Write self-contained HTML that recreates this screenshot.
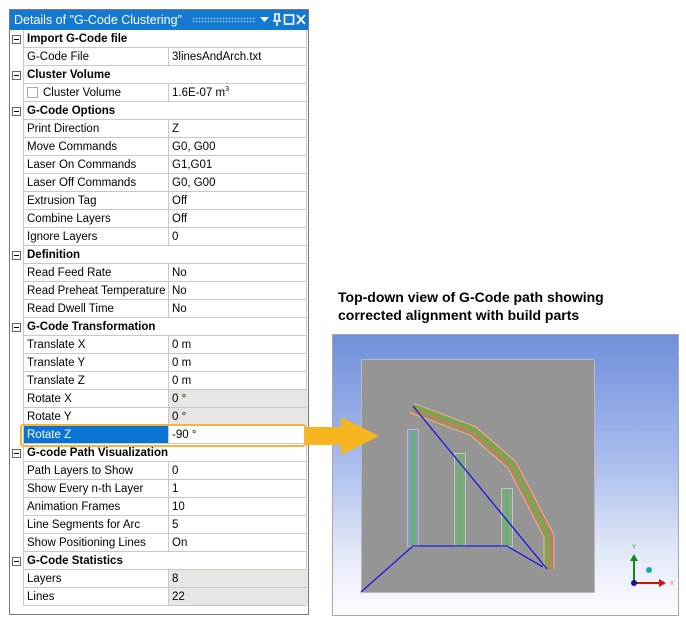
<!DOCTYPE html>
<html><head><meta charset="utf-8"><style>
*{margin:0;padding:0;box-sizing:border-box}
body{width:686px;height:624px;background:#fff;position:relative;overflow:hidden;font-family:"Liberation Sans",Arial,sans-serif;font-size:11.5px;color:#000}
.panel{position:absolute;left:9px;top:9px;width:300px;height:606px;border:1px solid #7a7a7a;background:#fff}
.title{position:absolute;left:10px;top:10px;width:298px;height:20px;background:#1479d0;color:#fff;font-size:12.5px;line-height:20px;padding-left:4px;white-space:nowrap}
.row{position:absolute;left:23px;width:284px;height:18px;border-bottom:1px solid #c8c8c8;border-left:1px solid #c8c8c8;border-right:1px solid #c8c8c8;line-height:19px;white-space:nowrap}
.row .n{position:absolute;left:3px;top:0}
.row .v{position:absolute;left:144px;top:0;width:140px;height:17px;border-left:1px solid #c8c8c8;padding-left:3px}
.row .v.g{background:#e8e6e2}
.hdr{font-weight:bold}
.mb{position:absolute;left:12px;width:9px;height:9px;border:1px solid #666;background:#fff}
.mb:after{content:"";position:absolute;left:1px;top:3px;width:5px;height:1px;background:#000}
.cap{position:absolute;left:338px;top:288px;font-family:"Liberation Sans",Arial,sans-serif;font-weight:bold;font-size:14px;line-height:18px;color:#000}
sup{font-size:7px;line-height:0;vertical-align:5px}
</style></head><body>
<div class="panel"></div>
<div class="title">Details of "G-Code Clustering"
<span style="position:absolute;left:182px;top:7px;width:64px;height:6px;background-image:radial-gradient(#7fb3e6 40%,transparent 45%);background-size:3px 3px"></span>
<svg style="position:absolute;left:248px;top:0" width="50" height="20"><path d="M2 7h9l-4.5 5z" fill="#fff"/><path d="M16 4h6M17 4v7h4V4M15 11h8M19 11v5" stroke="#fff" stroke-width="1.6" fill="none"/><rect x="26.5" y="5" width="9" height="9" stroke="#fff" stroke-width="1.6" fill="none"/><path d="M39 5l8 9M47 5l-8 9" stroke="#fff" stroke-width="1.8"/></svg>
</div>
<div class="row" style="top:30px;border-top:none"><span class="n hdr">Import G-Code file</span></div><div class="mb" style="top:35px"></div>
<div class="row" style="top:48px"><span class="n">G-Code File</span><span class="v">3linesAndArch.txt</span></div>
<div class="row" style="top:66px"><span class="n hdr">Cluster Volume</span></div><div class="mb" style="top:71px"></div>
<div class="row" style="top:84px"><span class="n"><span style="display:inline-block;width:11px;height:11px;border:1px solid #aaa;vertical-align:-2px;margin-right:5px"></span>Cluster Volume</span><span class="v">1.6E-07 m<sup>3</sup></span></div>
<div class="row" style="top:102px"><span class="n hdr">G-Code Options</span></div><div class="mb" style="top:107px"></div>
<div class="row" style="top:120px"><span class="n">Print Direction</span><span class="v">Z</span></div>
<div class="row" style="top:138px"><span class="n">Move Commands</span><span class="v">G0, G00</span></div>
<div class="row" style="top:156px"><span class="n">Laser On Commands</span><span class="v">G1,G01</span></div>
<div class="row" style="top:174px"><span class="n">Laser Off Commands</span><span class="v">G0, G00</span></div>
<div class="row" style="top:192px"><span class="n">Extrusion Tag</span><span class="v">Off</span></div>
<div class="row" style="top:210px"><span class="n">Combine Layers</span><span class="v">Off</span></div>
<div class="row" style="top:228px"><span class="n">Ignore Layers</span><span class="v">0</span></div>
<div class="row" style="top:246px"><span class="n hdr">Definition</span></div><div class="mb" style="top:251px"></div>
<div class="row" style="top:264px"><span class="n">Read Feed Rate</span><span class="v">No</span></div>
<div class="row" style="top:282px"><span class="n">Read Preheat Temperature</span><span class="v">No</span></div>
<div class="row" style="top:300px"><span class="n">Read Dwell Time</span><span class="v">No</span></div>
<div class="row" style="top:318px"><span class="n hdr">G-Code Transformation</span></div><div class="mb" style="top:323px"></div>
<div class="row" style="top:336px"><span class="n">Translate X</span><span class="v">0 m</span></div>
<div class="row" style="top:354px"><span class="n">Translate Y</span><span class="v">0 m</span></div>
<div class="row" style="top:372px"><span class="n">Translate Z</span><span class="v">0 m</span></div>
<div class="row" style="top:390px"><span class="n">Rotate X</span><span class="v g">0 °</span></div>
<div class="row" style="top:408px"><span class="n">Rotate Y</span><span class="v g">0 °</span></div>
<div class="row" style="top:426px"><span style="position:absolute;left:0;top:0;width:144px;height:17px;background:#0a74d4"></span><span class="n" style="color:#fff">Rotate Z</span><span class="v">-90 °</span></div>
<div class="row" style="top:444px"><span class="n hdr">G-code Path Visualization</span></div><div class="mb" style="top:449px"></div>
<div class="row" style="top:462px"><span class="n">Path Layers to Show</span><span class="v">0</span></div>
<div class="row" style="top:480px"><span class="n">Show Every n-th Layer</span><span class="v">1</span></div>
<div class="row" style="top:498px"><span class="n">Animation Frames</span><span class="v">10</span></div>
<div class="row" style="top:516px"><span class="n">Line Segments for Arc</span><span class="v">5</span></div>
<div class="row" style="top:534px"><span class="n">Show Positioning Lines</span><span class="v">On</span></div>
<div class="row" style="top:552px"><span class="n hdr">G-Code Statistics</span></div><div class="mb" style="top:557px"></div>
<div class="row" style="top:570px"><span class="n">Layers</span><span class="v g">8</span></div>
<div class="row" style="top:588px"><span class="n">Lines</span><span class="v g">22</span></div>
<div style="position:absolute;left:20px;top:424px;width:286px;height:23px;border:2px solid #f5b43a;border-radius:3px"></div>
<div class="cap">Top-down view of G-Code path showing<br>corrected alignment with build parts</div>
<div style="position:absolute;left:332px;top:334px;width:347px;height:282px;border:1px solid #a8a8a8;background:linear-gradient(#6f8fdc 0%,#a9bcec 45%,#e6ebf8 80%,#fbfcfe 100%)"></div>
<svg style="position:absolute;left:0;top:0" width="686" height="624">
<rect x="361.5" y="359.5" width="233" height="233" fill="#959595" stroke="#b8b8c0"/>
<g fill="#8a98ac" stroke="#a9c0d9"><rect x="407.5" y="429.5" width="11" height="117"/></g>
<g fill="#8f9c8f" stroke="#b5d2b0"><rect x="454.5" y="453.5" width="11" height="93"/><rect x="501.5" y="488.5" width="11" height="58"/></g>
<polyline points="412,408 473,431 512,465 549,536 549,569" fill="none" stroke="#e2bb92" stroke-width="11" stroke-linejoin="round"/>
<polyline points="412,408 473,431 512,465 549,536 549,569" fill="none" stroke="#ad8863" stroke-width="9" stroke-linejoin="round"/>
<g stroke="#22dd22" stroke-width="1.3" fill="none"><polyline points="413,406 473,429 512,463 547,533 547,569"/><line x1="413" y1="432" x2="413" y2="545"/><line x1="460" y1="455" x2="460" y2="545"/><line x1="507" y1="490" x2="507" y2="545"/></g>
<g stroke="#1a1adf" stroke-width="1.3" fill="none"><line x1="413" y1="406" x2="547" y2="569"/><polyline points="361,592 413,546 507,546 543,567"/></g>
<polygon points="306,427 341,427 341,417 379,436 341,455 341,445 306,445" fill="#f6b41e"/>
<line x1="634" y1="583" x2="634" y2="560" stroke="#118811" stroke-width="2"/><polygon points="630,561 638,561 634,554" fill="#118811"/>
<line x1="634" y1="583" x2="660" y2="583" stroke="#cc1111" stroke-width="2"/><polygon points="659,579 659,587 666,583" fill="#cc1111"/>
<circle cx="634" cy="583" r="3" fill="#1111aa"/><circle cx="649" cy="570" r="3" fill="#19a9b4"/>
<text x="632" y="549" font-size="6" fill="#2a2" font-family="Liberation Sans,sans-serif">Y</text><text x="670" y="585" font-size="6" fill="#e66" font-family="Liberation Sans,sans-serif">X</text>
</svg>
</body></html>
